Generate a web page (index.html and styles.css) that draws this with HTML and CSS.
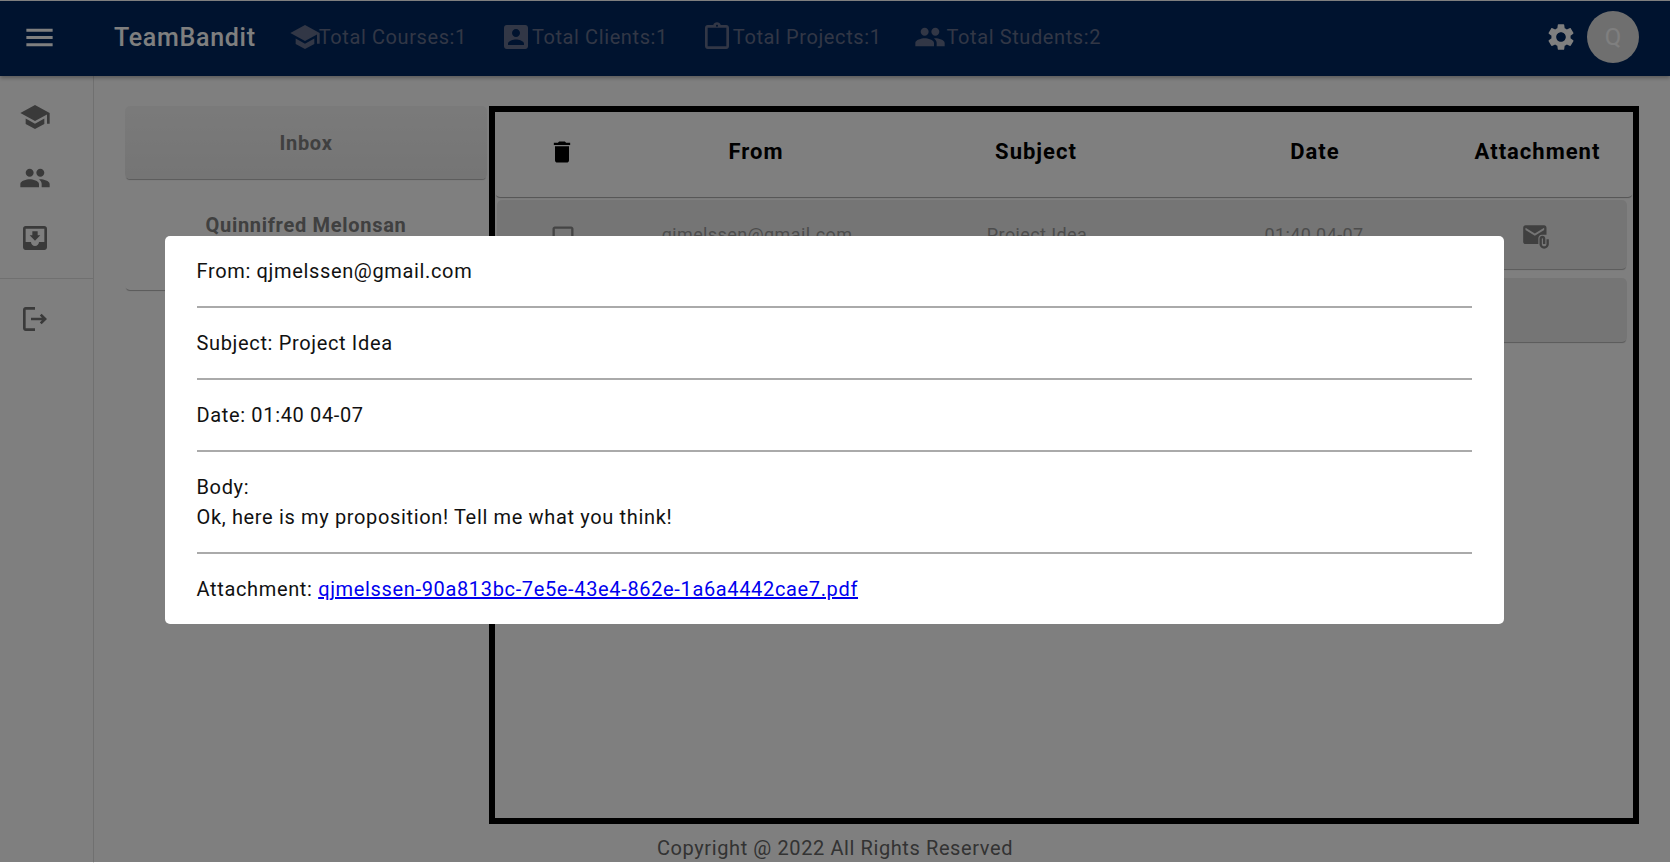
FILE: index.html
```html
<!DOCTYPE html>
<html lang="en">
<head>
  <meta charset="utf-8">
  <title>TeamBandit</title>
  <link rel="stylesheet" href="styles.css">
</head>
<body>
  <header class="appbar">
    <svg class="menu-icon" viewBox="0 0 24 24"><path d="M3 18h18v-2H3v2zm0-5h18v-2H3v2zm0-7v2h18V6H3z"/></svg>
    <div class="brand">TeamBandit</div>
    <div class="stats">
      <div class="stat">
        <svg class="stat-icon school" viewBox="0 0 24 24"><path d="M5 13.18v4L12 21l7-3.82v-4L12 17l-7-3.82zM12 3 1 9l11 6 9-4.91V17h2V9L12 3z"/></svg>
        <span>Total Courses:1</span>
      </div>
      <div class="stat">
        <svg class="stat-icon" viewBox="0 0 24 24"><path d="M3 5v14c0 1.1.89 2 2 2h14c1.1 0 2-.9 2-2V5c0-1.1-.9-2-2-2H5c-1.11 0-2 .9-2 2zm12 4c0 1.66-1.34 3-3 3s-3-1.34-3-3 1.34-3 3-3 3 1.34 3 3zm-9 8c0-2 4-3.1 6-3.1s6 1.1 6 3.1v1H6v-1z"/></svg>
        <span>Total Clients:1</span>
      </div>
      <div class="stat">
        <svg class="stat-icon" viewBox="0 0 24 24"><path d="M19 3h-4.18C14.4 1.84 13.3 1 12 1s-2.4.84-2.82 2H5c-1.1 0-2 .9-2 2v14c0 1.1.9 2 2 2h14c1.1 0 2-.9 2-2V5c0-1.1-.9-2-2-2zm-7-.25c.41 0 .75.34.75.75s-.34.75-.75.75-.75-.34-.75-.75.34-.75.75-.75zM19 19H5V5h14v14z"/></svg>
        <span>Total Projects:1</span>
      </div>
      <div class="stat">
        <svg class="stat-icon" viewBox="0 0 24 24"><path d="M16 11c1.66 0 2.99-1.34 2.99-3S17.66 5 16 5c-1.66 0-3 1.34-3 3s1.34 3 3 3zm-8 0c1.66 0 2.99-1.34 2.99-3S9.66 5 8 5C6.34 5 5 6.34 5 8s1.34 3 3 3zm0 2c-2.33 0-7 1.17-7 3.5V19h14v-2.5c0-2.33-4.67-3.5-7-3.5zm8 0c-.29 0-.62.02-.97.05 1.16.84 1.97 1.97 1.97 3.45V19h6v-2.5c0-2.33-4.67-3.5-7-3.5z"/></svg>
        <span>Total Students:2</span>
      </div>
    </div>
    <svg class="gear-icon" viewBox="0 0 24 24"><path d="M19.14 12.94c.04-.3.06-.61.06-.94 0-.32-.02-.64-.07-.94l2.03-1.58c.18-.14.23-.41.12-.61l-1.92-3.32c-.12-.22-.37-.29-.59-.22l-2.39.96c-.5-.38-1.03-.7-1.62-.94l-.36-2.54c-.04-.24-.24-.41-.48-.41h-3.84c-.24 0-.43.17-.47.41l-.36 2.54c-.59.24-1.13.57-1.62.94l-2.39-.96c-.22-.08-.47 0-.59.22L2.74 8.87c-.12.21-.08.47.12.61l2.03 1.58c-.05.3-.09.63-.09.94s.02.64.07.94l-2.03 1.58c-.18.14-.23.41-.12.61l1.92 3.32c.12.22.37.29.59.22l2.39-.96c.5.38 1.03.7 1.62.94l.36 2.54c.05.24.24.41.48.41h3.84c.24 0 .44-.17.47-.41l.36-2.54c.59-.24 1.13-.56 1.62-.94l2.39.96c.22.08.47 0 .59-.22l1.92-3.32c.12-.22.07-.47-.12-.61l-2.01-1.58zM12 15.6c-1.98 0-3.6-1.62-3.6-3.6s1.62-3.6 3.6-3.6 3.6 1.62 3.6 3.6-1.62 3.6-3.6 3.6z"/></svg>
    <div class="avatar">Q</div>
  </header>

  <div class="page">
    <nav class="drawer">
      <div class="drawer-group">
        <div class="drawer-item"><svg viewBox="0 0 24 24"><path d="M5 13.18v4L12 21l7-3.82v-4L12 17l-7-3.82zM12 3 1 9l11 6 9-4.91V17h2V9L12 3z"/></svg></div>
        <div class="drawer-item"><svg viewBox="0 0 24 24"><path d="M16 11c1.66 0 2.99-1.34 2.99-3S17.66 5 16 5c-1.66 0-3 1.34-3 3s1.34 3 3 3zm-8 0c1.66 0 2.99-1.34 2.99-3S9.66 5 8 5C6.34 5 5 6.34 5 8s1.34 3 3 3zm0 2c-2.33 0-7 1.17-7 3.5V19h14v-2.5c0-2.33-4.67-3.5-7-3.5zm8 0c-.29 0-.62.02-.97.05 1.16.84 1.97 1.97 1.97 3.45V19h6v-2.5c0-2.33-4.67-3.5-7-3.5z"/></svg></div>
        <div class="drawer-item"><svg viewBox="0 0 24 24"><path d="M19 3H4.99c-1.11 0-1.98.89-1.98 2L3 19c0 1.1.88 2 1.99 2H19c1.1 0 2-.9 2-2V5c0-1.11-.9-2-2-2zm0 12h-4c0 1.66-1.35 3-3 3s-3-1.34-3-3H4.99V5H19v10zm-3-5h-2V7h-4v3H8l4 4 4-4z"/></svg></div>
      </div>
      <div class="drawer-group">
        <div class="drawer-item"><svg viewBox="0 0 24 24"><path d="M17 8l-1.41 1.41L17.17 11H9v2h8.17l-1.58 1.58L17 16l4-4zM5 5h7V3H5c-1.1 0-2 .9-2 2v14c0 1.1.9 2 2 2h7v-2H5V5z"/></svg></div>
      </div>
    </nav>

    <main class="content">
      <div class="mail-area">
        <aside class="folders">
          <div class="folder folder-active">Inbox</div>
          <div class="folder folder-user">
            <span>Quinnifred Melonsan</span>
          </div>
        </aside>

        <section class="mailbox">
          <div class="mail-row mail-head">
            <div><svg class="trash-icon" viewBox="0 0 24 24"><path d="M6 19c0 1.1.9 2 2 2h8c1.1 0 2-.9 2-2V7H6v12zM19 4h-3.5l-1-1h-5l-1 1H5v2h14V4z"/></svg></div>
            <div>From</div>
            <div>Subject</div>
            <div>Date</div>
            <div>Attachment</div>
          </div>
          <div class="mail-row mail-item">
            <div><svg class="check-icon" viewBox="0 0 24 24"><path d="M19 5v14H5V5h14m0-2H5c-1.1 0-2 .9-2 2v14c0 1.1.9 2 2 2h14c1.1 0 2-.9 2-2V5c0-1.1-.9-2-2-2z"/></svg></div>
            <div>qjmelssen@gmail.com</div>
            <div>Project Idea</div>
            <div>01:40 04-07</div>
            <div><svg class="mail-icon" viewBox="0 0 24 24"><path d="M21 10V4c0-1.1-.9-2-2-2H3c-1.1 0-1.99.9-1.99 2L1 16c0 1.1.9 2 2 2h11v-5c0-1.66 1.34-3 3-3h4zm-10 1L3 6V4l8 5 8-5v2l-8 5z"/><path d="M21 14v4c0 1.1-.9 2-2 2s-2-.9-2-2v-4.5c0-.28.22-.5.5-.5s.5.22.5.5V18h2v-4.5c0-1.38-1.12-2.5-2.5-2.5S15 12.12 15 13.5V18c0 2.21 1.79 4 4 4s4-1.79 4-4v-4h-2z"/></svg></div>
          </div>
          <div class="mail-row mail-item mail-item-short"></div>
        </section>
      </div>
      <footer class="copyright">Copyright @ 2022 All Rights Reserved</footer>
    </main>
  </div>

  <div class="backdrop">
    <div class="dialog">
      <div class="dialog-line">From: qjmelssen@gmail.com</div>
      <hr class="dialog-rule">
      <div class="dialog-line">Subject: Project Idea</div>
      <hr class="dialog-rule">
      <div class="dialog-line">Date: 01:40 04-07</div>
      <hr class="dialog-rule">
      <div class="dialog-line">Body:</div>
      <div class="dialog-line">Ok, here is my proposition! Tell me what you think!</div>
      <hr class="dialog-rule">
      <div class="dialog-line">Attachment: <a href="#">qjmelssen-90a813bc-7e5e-43e4-862e-1a6a4442cae7.pdf</a></div>
    </div>
  </div>
</body>
</html>
```

FILE: styles.css
```css
html, body {
  height: 100%;
}

body {
  margin: 0;
  display: flex;
  flex-direction: column;
  overflow: hidden;
  background-color: #fff;
  font-family: Roboto, "Liberation Sans", sans-serif;
}

.appbar {
  flex: none;
  display: flex;
  align-items: center;
  box-sizing: border-box;
  height: 76px;
  padding: 0 31px 3px 22px;
  border-top: 1px solid #fff;
  background-color: #00275e;
  box-shadow: 0 2px 4px rgba(0, 0, 0, 0.3);
  position: relative;
}

.menu-icon {
  width: 35px;
  height: 35px;
  fill: #fff;
}

.brand {
  margin-left: 57px;
  font-size: 25px;
  font-weight: 500;
  letter-spacing: 0.7px;
  color: #fff;
}

.stats {
  display: flex;
  flex: 1;
  gap: 33px;
  margin-left: 33px;
}

.stat {
  display: flex;
  align-items: center;
  font-size: 20px;
  letter-spacing: 0.6px;
  color: #646e8c;
}

.stat-icon {
  width: 32px;
  height: 32px;
  fill: #646e8c;
}

.stat-icon.school {
  margin-right: -2px;
}

.gear-icon {
  width: 32px;
  height: 32px;
  margin-right: 10px;
  fill: #fff;
}

.avatar {
  display: flex;
  justify-content: center;
  align-items: center;
  width: 52px;
  height: 52px;
  border-radius: 50%;
  background-color: #dedede;
  font-size: 24px;
  color: #fff;
}

.page {
  flex: 1;
  display: flex;
  min-height: 0;
}

.drawer {
  flex: none;
  box-sizing: border-box;
  width: 94px;
  padding-top: 11px;
  border-right: 1px solid #e0e0e0;
}

.drawer-group + .drawer-group {
  margin-top: 9px;
  padding-top: 10px;
  border-top: 1px solid #e0e0e0;
}

.drawer-item {
  display: flex;
  align-items: center;
  justify-content: center;
  height: 60.5px;
  padding-right: 24px;
}

.drawer-item svg {
  width: 32px;
  height: 32px;
  fill: #757575;
}

.content {
  flex: 1;
  display: flex;
  flex-direction: column;
  min-width: 0;
  padding: 30px 31px 0 31px;
}

.mail-area {
  display: flex;
  gap: 2px;
}

.folders {
  flex: none;
  width: 362px;
}

.folder {
  display: flex;
  justify-content: center;
  font-weight: 700;
  font-size: 20px;
  letter-spacing: 0.7px;
  color: #808080;
  border-radius: 5px;
  box-shadow: 0 2px 1px -1px rgba(0, 0, 0, 0.3);
}

.folder-active {
  align-items: center;
  height: 73px;
  margin-bottom: 7px;
  background: linear-gradient(#f5f5f5, #eaeaea);
  box-sizing: border-box;
}

.folder-user {
  height: 104px;
  padding-top: 27px;
  box-sizing: border-box;
}

.mailbox {
  flex: none;
  box-sizing: border-box;
  width: 1150px;
  height: 718px;
  border: 6px solid #000;
}

.mail-row {
  display: grid;
  align-items: center;
  justify-items: center;
  border-radius: 5px;
}

.mail-row svg {
  display: block;
}

.mail-head {
  grid-template-columns: 133px 256px 304px 254px 191px;
  height: 85px;
  padding-bottom: 6px;
  box-sizing: border-box;
  font-size: 22px;
  font-weight: 700;
  letter-spacing: 1px;
  color: #000;
  box-shadow: 0 2px 1px -1px rgba(0, 0, 0, 0.35);
}

.trash-icon {
  width: 28px;
  height: 28px;
  fill: #000;
}

.mail-item {
  grid-template-columns: 132px 256px 304px 250px 189px;
  height: 69px;
  margin: 3px 6px 0 2px;
  box-sizing: border-box;
  background-color: #ebebeb;
  font-size: 18px;
  letter-spacing: 0.4px;
  color: #999;
  box-shadow: 0 2px 1px -1px rgba(0, 0, 0, 0.3);
}

.mail-item-short {
  height: 64px;
  margin-top: 9px;
}

.check-icon {
  width: 28px;
  height: 28px;
  margin-top: 5px;
  fill: #888;
}

.mail-icon {
  width: 28px;
  height: 28px;
  margin: 5px 0 0 4px;
  fill: #808080;
}

.copyright {
  margin-top: 12px;
  text-align: center;
  font-size: 20px;
  letter-spacing: 0.6px;
  color: #666;
  width: 1420px;
}

.backdrop {
  position: fixed;
  top: 0;
  left: 0;
  right: 0;
  bottom: 1px;
  display: flex;
  justify-content: center;
  align-items: center;
  padding-bottom: 3px;
  background-color: rgba(0, 0, 0, 0.5);
}

.dialog {
  box-sizing: border-box;
  width: 1339px;
  margin-right: 2px;
  padding: 20px 32px 20px;
  border-radius: 5px;
  background-color: #fff;
  font-size: 20px;
  letter-spacing: 0.65px;
  color: #111;
}

.dialog-line {
  line-height: 30px;
}

.dialog-line a {
  color: #00e;
}

.dialog-rule {
  height: 2px;
  margin: 20px 0;
  border: 0;
  background-color: #aaa;
}
```
